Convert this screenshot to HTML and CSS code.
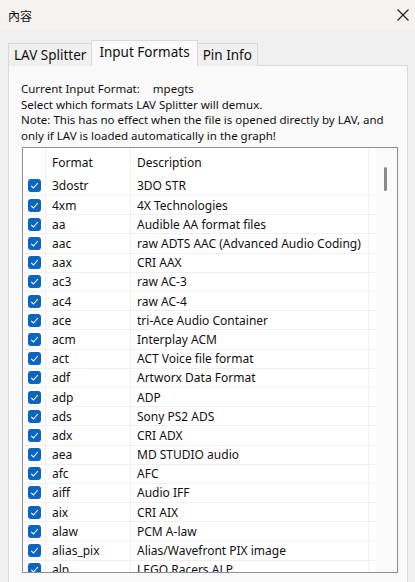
FILE: index.html
```html
<!DOCTYPE html>
<html lang="zh-Hant">
<head>
  <meta charset="UTF-8">
  <title>內容</title>
  <link rel="stylesheet" href="styles.css">
</head>
<body>
  <!-- Thanh tiêu đề -->
  <div class="titlebar">
    <span class="title">內容</span>
    <svg class="close" width="12" height="12" viewBox="0 0 12 12">
      <path d="M0.5 0.5 L11.5 11.5 M11.5 0.5 L0.5 11.5" stroke="#1a1a1a" stroke-width="1.1" fill="none"/>
    </svg>
  </div>

  <div class="dialog">
    <div class="tabs">
      <div class="tab">LAV Splitter</div>
      <div class="tab active">Input Formats</div>
      <div class="tab">Pin Info</div>
    </div>

    <div class="panel">
      <div class="info">
        <p>Current Input Format:<span class="current">mpegts</span></p>
        <p>Select which formats LAV Splitter will demux.</p>
        <p>Note: This has no effect when the file is opened directly by LAV, and only if LAV is loaded automatically in the graph!</p>
      </div>

      <div class="listbox">
        <div class="list">
          <div class="row head">
            <div class="cell"></div>
            <div class="cell">Format</div>
            <div class="cell">Description</div>
            <div class="cell"></div>
          </div>
          <div id="rows"></div>
        </div>
        <div class="scrollbar"><div class="thumb"></div></div>
      </div>
    </div>
  </div>

  <script>
    const formats = [
      ["3dostr", "3DO STR"],
      ["4xm", "4X Technologies"],
      ["aa", "Audible AA format files"],
      ["aac", "raw ADTS AAC (Advanced Audio Coding)"],
      ["aax", "CRI AAX"],
      ["ac3", "raw AC-3"],
      ["ac4", "raw AC-4"],
      ["ace", "tri-Ace Audio Container"],
      ["acm", "Interplay ACM"],
      ["act", "ACT Voice file format"],
      ["adf", "Artworx Data Format"],
      ["adp", "ADP"],
      ["ads", "Sony PS2 ADS"],
      ["adx", "CRI ADX"],
      ["aea", "MD STUDIO audio"],
      ["afc", "AFC"],
      ["aiff", "Audio IFF"],
      ["aix", "CRI AIX"],
      ["alaw", "PCM A-law"],
      ["alias_pix", "Alias/Wavefront PIX image"],
      ["alp", "LEGO Racers ALP"]
    ];

    const rows = document.getElementById("rows");
    formats.forEach(([name, desc]) => {
      const row = document.createElement("div");
      row.className = "row";
      row.innerHTML = `
        <div class="cell"><span class="check">
          <svg width="9" height="9" viewBox="0 0 9 9"><path d="M1.2 4.8 L3.5 7 L7.8 2" stroke="#fff" stroke-width="1.1" fill="none"/></svg>
        </span></div>
        <div class="cell">${name}</div>
        <div class="cell">${desc}</div>
        <div class="cell"></div>
      `;
      rows.appendChild(row);
    });
  </script>
</body>
</html>
```

FILE: styles.css
```css
* {
  margin: 0;
  padding: 0;
  box-sizing: border-box;
}

body {
  width: 415px;
  height: 582px;
  overflow: hidden;
  background: #f0f0f0;
  font-family: "Noto Sans", "Noto Sans CJK TC", sans-serif;
  color: #111;
}

/* Thanh tiêu đề */
.titlebar {
  height: 30px;
  background: #f5f2ef;
  display: flex;
  align-items: center;
  justify-content: space-between;
  padding: 0 6px 0 8px;
}

.title {
  font-size: 12px;
  font-family: "Noto Sans CJK TC", sans-serif;
}

.dialog {
  padding: 10px 7px 0 8px;
}

/* Tabs */
.tabs {
  display: flex;
  align-items: flex-end;
  height: 26px;
  position: relative;
  z-index: 1;
}

.tab {
  height: 23px;
  padding: 0 5px;
  font-size: 13.5px;
  line-height: 22px;
  border: 1px solid #d9d9d9;
  border-bottom: none;
  background: #f0f0f0;
}

.tab + .tab {
  margin-left: -1px;
}

.tab.active {
  height: 26px;
  line-height: 23px;
  background: #f9f9f9;
  padding: 0 7px;
}

/* Panel */
.panel {
  height: 530px;
  border: 1px solid #d9d9d9;
  background: #f9f9f9;
  margin-top: -1px;
  padding: 15px 0 0 12px;
}

.info {
  font-size: 11.5px;
  line-height: 15.6px;
}

.current {
  margin-left: 13px;
}

/* Danh sách định dạng */
.listbox {
  margin-top: 4px;
  margin-left: 1px;
  width: 376px;
  height: 426px;
  border: 1px solid #8b8f94;
  background: #fff;
  display: flex;
  overflow: hidden;
}

.list {
  width: 353px;
  font-size: 12px;
}

.row {
  display: grid;
  grid-template-columns: 23px 85px 238px 7px;
  height: 19.2px;
  border-bottom: 1px solid #f0f0f0;
}

.row.head {
  height: 28.5px;
  border-bottom: none;
}

.cell {
  display: flex;
  align-items: center;
  padding-left: 6px;
  white-space: nowrap;
  overflow: hidden;
  border-right: 1px solid #f0f0f0;
}

.cell:first-child {
  padding-left: 5px;
}

.cell:last-child {
  border-right: none;
}

.check {
  width: 13px;
  height: 13px;
  border-radius: 3px;
  background: #0a64c2;
  display: flex;
  align-items: center;
  justify-content: center;
}

.scrollbar {
  flex: 1;
  background: #fafafa;
  position: relative;
}

.thumb {
  position: absolute;
  left: 8px;
  top: 19px;
  width: 3px;
  height: 24px;
  border-radius: 2px;
  background: #8a8a8a;
}
```
